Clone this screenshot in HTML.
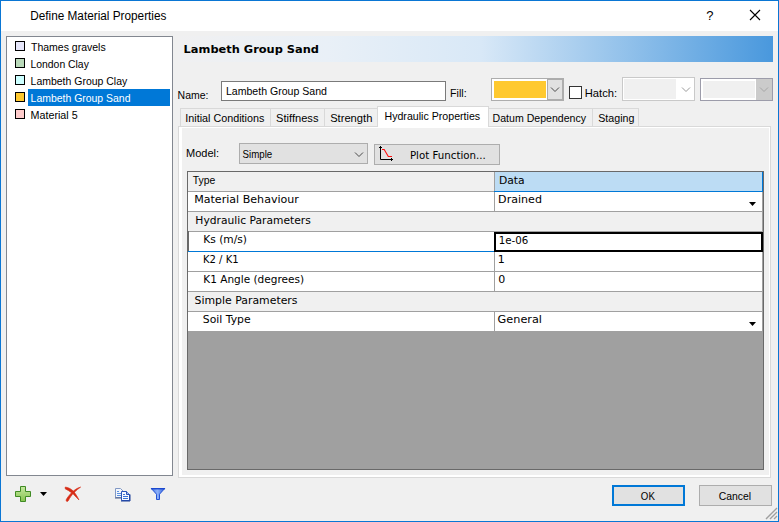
<!DOCTYPE html>
<html><head><meta charset="utf-8"><title>Define Material Properties</title>
<style>
html,body{margin:0;padding:0;}
body{width:779px;height:522px;overflow:hidden;background:#f0f0f0;position:relative;font-family:"Liberation Sans",sans-serif;font-size:11px;color:#000;}
.a{position:absolute;box-sizing:border-box;}
svg text{white-space:pre;}
.tab{position:absolute;box-sizing:border-box;top:108px;height:18px;border:1px solid #d9d9d9;border-bottom:none;background:#f0f0f0;}
.w{background:#fff;}
.g{background:#f0f0f0;}
</style></head><body>
<!-- window frame -->
<div class="a" style="left:0;top:0;width:779px;height:522px;border:1px solid #0a76d4;"></div>
<div class="a w" style="left:1px;top:1px;width:777px;height:30px;"></div>
<svg class="a" style="left:749px;top:9px;" width="12" height="12" viewBox="0 0 12 12"><path d="M1 1 L11 11 M11 1 L1 11" stroke="#000" stroke-width="1.1" fill="none"/></svg>

<!-- list box -->
<div class="a w" style="left:6px;top:36px;width:167px;height:440px;border:1px solid #828790;"></div>
<div class="a" style="left:28px;top:89px;width:142px;height:17px;background:#0078d7;"></div>
<div class="a" style="left:15px;top:41px;width:10px;height:10px;border:1px solid #000;background:#e6e6fa;"></div>
<div class="a" style="left:15px;top:58px;width:10px;height:10px;border:1px solid #000;background:#b9d9b9;"></div>
<div class="a" style="left:15px;top:75px;width:10px;height:10px;border:1px solid #000;background:#ccffff;"></div>
<div class="a" style="left:15px;top:92px;width:10px;height:10px;border:1px solid #000;background:#ffc92f;"></div>
<div class="a" style="left:15px;top:109px;width:10px;height:10px;border:1px solid #000;background:#ffcccc;"></div>

<!-- header band -->
<div class="a" style="left:178px;top:36px;width:595px;height:26px;background:linear-gradient(to right,#f0f0f1 0%,#e9f0f7 25%,#d8e8f7 51%,#90c0ea 76%,#4998dd 100%);"></div>

<!-- name row -->
<div class="a w" style="left:221px;top:81px;width:225px;height:20px;border:1px solid #7a7a7a;"></div>
<div class="a w" style="left:491px;top:78px;width:73px;height:23px;border:1px solid #adadad;"></div>
<div class="a" style="left:494px;top:81px;width:52px;height:17px;background:#ffc92f;"></div>
<div class="a" style="left:547px;top:79px;width:17px;height:21px;background:#e1e1e1;border:1px solid #adadad;border-right-width:2px;"></div>
<svg class="a" style="left:550px;top:86px;" width="10" height="7" viewBox="0 0 10 7"><path d="M1 1.500 L5 5.500 L9 1.500" stroke="#4a4a4a" stroke-width="1" fill="none"/></svg>
<div class="a w" style="left:569px;top:86px;width:13px;height:13px;border:1px solid #333;"></div>
<div class="a w" style="left:622px;top:77px;width:73px;height:24px;border:1px solid #c9c9c9;"></div>
<div class="a g" style="left:624px;top:79px;width:52px;height:20px;"></div>
<svg class="a" style="left:681px;top:86px;" width="10" height="7" viewBox="0 0 10 7"><path d="M1 1.500 L5 5.500 L9 1.500" stroke="#9a9a9a" stroke-width="1" fill="none"/></svg>
<div class="a w" style="left:700px;top:78px;width:73px;height:23px;border:1px solid #9c9caa;"></div>
<div class="a g" style="left:703px;top:81px;width:52px;height:17px;"></div>
<div class="a" style="left:756px;top:79px;width:16px;height:21px;background:#cbcbcb;"></div>
<svg class="a" style="left:759px;top:86px;" width="10" height="7" viewBox="0 0 10 7"><path d="M1 1.500 L5 5.500 L9 1.500" stroke="#a6a6a6" stroke-width="1" fill="none"/></svg>

<!-- tab pane -->
<div class="a w" style="left:178px;top:126px;width:593px;height:352px;border:1px solid #d9d9d9;"></div>
<div class="a g" style="left:182px;top:128px;width:587px;height:347px;"></div>
<!-- tabs -->
<div class="tab" style="left:180px;width:91px;"></div>
<div class="tab" style="left:270px;width:55px;"></div>
<div class="tab" style="left:324px;width:54px;"></div>
<div class="tab" style="left:488px;width:105px;"></div>
<div class="tab" style="left:592px;width:47px;"></div>
<div class="a w" style="left:377px;top:106px;width:112px;height:21px;border:1px solid #d9d9d9;border-bottom:none;"></div>

<!-- model row -->
<div class="a" style="left:239px;top:143px;width:129px;height:21px;background:#e1e1e1;border:1px solid #adadad;"></div>
<svg class="a" style="left:354px;top:151px;" width="10" height="7" viewBox="0 0 10 7"><path d="M1 1.500 L5 5.500 L9 1.500" stroke="#4a4a4a" stroke-width="1" fill="none"/></svg>
<div class="a" style="left:374px;top:144px;width:126px;height:21px;background:#e1e1e1;border:1px solid #adadad;"></div>
<svg class="a" style="left:378px;top:145px;" width="17" height="17" viewBox="0 0 17 17"><path d="M2.500 1 V14.500 H15" stroke="#000" stroke-width="1" fill="none"/><path d="M1 2.500 H4 M13.500 13 V16" stroke="#000" stroke-width="1" fill="none"/><path d="M4 4.500 H6.200 L10.300 11.500 H14" stroke="#ff1010" stroke-width="1.100" fill="none"/></svg>

<!-- grid -->
<div class="a" style="left:187px;top:171px;width:577px;height:299px;background:#a0a0a0;border:1px solid #696969;"></div>
<div class="a g" style="left:188px;top:172px;width:306px;height:19px;"></div>
<div class="a" style="left:495px;top:172px;width:268px;height:19px;background:#bcdcf4;border-right:1px solid #0078d7;"></div>
<div class="a" style="left:494px;top:172px;width:1px;height:159px;background:#a0a0a0;"></div>
<div class="a" style="left:188px;top:191px;width:306px;height:1px;background:#a0a0a0;"></div>
<div class="a" style="left:494px;top:191px;width:269px;height:1px;background:#0078d7;"></div>
<!-- rows -->
<div class="a w" style="left:188px;top:192px;width:306px;height:19px;"></div>
<div class="a w" style="left:495px;top:192px;width:267px;height:19px;"></div>
<div class="a g" style="left:188px;top:212px;width:574px;height:19px;"></div>
<div class="a w" style="left:188px;top:232px;width:306px;height:19px;"></div>
<div class="a w" style="left:495px;top:232px;width:267px;height:19px;"></div>
<div class="a w" style="left:188px;top:252px;width:306px;height:19px;"></div>
<div class="a w" style="left:495px;top:252px;width:267px;height:19px;"></div>
<div class="a w" style="left:188px;top:272px;width:306px;height:19px;"></div>
<div class="a w" style="left:495px;top:272px;width:267px;height:19px;"></div>
<div class="a g" style="left:188px;top:292px;width:574px;height:19px;"></div>
<div class="a w" style="left:188px;top:312px;width:306px;height:19px;"></div>
<div class="a w" style="left:495px;top:312px;width:267px;height:19px;"></div>
<!-- Ks focus -->
<div class="a" style="left:188px;top:231px;width:1px;height:20px;background:#696969;"></div>
<div class="a" style="left:188px;top:251px;width:306px;height:1px;background:#0078d7;"></div>
<div class="a w" style="left:494px;top:232px;width:269px;height:20px;border:2px solid #000;"></div>
<svg class="a" style="left:749px;top:202px;" width="7" height="4" viewBox="0 0 7 4"><path d="M0 0 H7 L3.500 4 Z" fill="#000"/></svg>
<svg class="a" style="left:749px;top:322px;" width="7" height="4" viewBox="0 0 7 4"><path d="M0 0 H7 L3.500 4 Z" fill="#000"/></svg>

<!-- bottom toolbar -->
<svg class="a" style="left:14px;top:485px;" width="18" height="18" viewBox="0 0 18 18"><defs><linearGradient id="gp" x1="0" y1="0" x2="0" y2="1"><stop offset="0" stop-color="#c5e8a0"/><stop offset="1" stop-color="#86c44f"/></linearGradient></defs><path d="M6.500 1.500 H11.500 V6.500 H16.500 V11.500 H11.500 V16.500 H6.500 V11.500 H1.500 V6.500 H6.500 Z" fill="url(#gp)" stroke="#3f8a24" stroke-width="1"/></svg>
<svg class="a" style="left:40px;top:492px;" width="7" height="4" viewBox="0 0 7 4"><path d="M0 0 H7 L3.500 4 Z" fill="#000"/></svg>
<svg class="a" style="left:64px;top:485px;" width="18" height="18" viewBox="0 0 18 18"><path d="M1.200 2.100 C4 2.200,7.200 4.200,9 5.800 C11.200 8.200,13.600 12,14.900 14.900 C12.500 12.500,10 9.600,7.600 7.700 C5.500 6.100,3 4.600,1.300 3.900 Z" fill="#d62a14" stroke="#d8341e" stroke-width="0.700" stroke-linejoin="round"/><path d="M16.600 2.100 C13 3,10 5.300,7.400 7.900 C4.800 10.600,2.600 13.600,2.100 15 C2.100 16.700,3.500 17,4.300 15.700 C5.600 13,8 9.600,10.100 7.500 C12.100 5.500,14.600 3.500,16.600 2.100 Z" fill="#d62a14" stroke="#d8341e" stroke-width="0.700" stroke-linejoin="round"/></svg>
<svg class="a" style="left:114px;top:487px;" width="18" height="15" viewBox="0 0 18 15"><path d="M1.500 1.500 H6.500 L9.500 4.500 V10.500 H1.500 Z" fill="#f3f7fd" stroke="#8198c4" stroke-width="1"/><path d="M1 11 H8" stroke="#4a5c88" stroke-width="1"/><path d="M3 4.500 H5 M3 6.500 H7 M3 8.500 H7" stroke="#5a90e0" stroke-width="1"/><path d="M7.500 4.500 H12.500 L15.500 7.500 V13.500 H7.500 Z" fill="#f6f9ff" stroke="#2a55b8" stroke-width="1"/><path d="M12.500 4.500 V7.500 H15.500" stroke="#2a55b8" stroke-width="1" fill="#9bb8ee"/><path d="M7 14 H16 V7.500" stroke="#1d3f98" stroke-width="1" fill="none"/><path d="M9 7.500 H11 M9 9.500 H14 M9 11.500 H14" stroke="#3a74d8" stroke-width="1"/></svg>
<svg class="a" style="left:150px;top:487px;" width="16" height="14" viewBox="0 0 16 14"><defs><linearGradient id="gf" x1="0" y1="0" x2="1" y2="0"><stop offset="0" stop-color="#3f70e6"/><stop offset="0.450" stop-color="#8fb2f8"/><stop offset="1" stop-color="#2f5fde"/></linearGradient></defs><path d="M1.300 1.500 H14.700 L9.500 7.200 V12.500 H6.500 V7.200 Z" fill="url(#gf)" stroke="#2352d6" stroke-width="1" stroke-linejoin="round"/><path d="M1 1.700 H15" stroke="#1c49cf" stroke-width="1.400"/></svg>

<!-- buttons -->
<div class="a" style="left:612px;top:485px;width:73px;height:21px;background:#e1e1e1;border:2px solid #0078d7;"></div>
<div class="a" style="left:699px;top:485px;width:73px;height:21px;background:#e1e1e1;border:1px solid #adadad;"></div>
<svg class="a" style="left:764px;top:506px;" width="14" height="14" viewBox="0 0 14 14"><path d="M13 2 L2 13 M13 6 L6 13 M13 10 L10 13" stroke="#a0a0a0" stroke-width="1.400" fill="none"/></svg>
<svg class="a" style="left:0;top:0;" width="779" height="522" viewBox="0 0 779 522">
<text id="title" x="30.24" y="20" font-family="'Liberation Sans',sans-serif" font-size="12" font-weight="normal" fill="#000" textLength="136.16" lengthAdjust="spacingAndGlyphs">Define Material Properties</text>
<text id="q" x="706.34" y="20" font-family="'Liberation Sans',sans-serif" font-size="13" font-weight="normal" fill="#000">?</text>
<text id="l1" x="30.97" y="51" font-family="'Liberation Sans',sans-serif" font-size="11" font-weight="normal" fill="#000" textLength="74.75" lengthAdjust="spacingAndGlyphs">Thames gravels</text>
<text id="l2" x="30.46" y="68" font-family="'Liberation Sans',sans-serif" font-size="11" font-weight="normal" fill="#000" textLength="58.42" lengthAdjust="spacingAndGlyphs">London Clay</text>
<text id="l3" x="30.61" y="85" font-family="'Liberation Sans',sans-serif" font-size="11" font-weight="normal" fill="#000" textLength="96.60" lengthAdjust="spacingAndGlyphs">Lambeth Group Clay</text>
<text id="l4" x="30.61" y="102" font-family="'Liberation Sans',sans-serif" font-size="11" font-weight="normal" fill="#fff" textLength="99.85" lengthAdjust="spacingAndGlyphs">Lambeth Group Sand</text>
<text id="l5" x="30.58" y="119" font-family="'Liberation Sans',sans-serif" font-size="11" font-weight="normal" fill="#000" textLength="47.06" lengthAdjust="spacingAndGlyphs">Material 5</text>
<text id="hdr" x="183.62" y="53" font-family="'DejaVu Sans','Liberation Sans',sans-serif" font-size="11" font-weight="bold" fill="#000" textLength="135.36" lengthAdjust="spacingAndGlyphs">Lambeth Group Sand</text>
<text id="name" x="177.58" y="99" font-family="'Liberation Sans',sans-serif" font-size="11" font-weight="normal" fill="#000" textLength="30.82" lengthAdjust="spacingAndGlyphs">Name:</text>
<text id="nameval" x="225.95" y="95" font-family="'Liberation Sans',sans-serif" font-size="11" font-weight="normal" fill="#000" textLength="101.03" lengthAdjust="spacingAndGlyphs">Lambeth Group Sand</text>
<text id="fill" x="450.04" y="97" font-family="'Liberation Sans',sans-serif" font-size="11" font-weight="normal" fill="#000" textLength="16.63" lengthAdjust="spacingAndGlyphs">Fill:</text>
<text id="hatch" x="584.74" y="97" font-family="'Liberation Sans',sans-serif" font-size="11" font-weight="normal" fill="#000" textLength="32.34" lengthAdjust="spacingAndGlyphs">Hatch:</text>
<text id="t1" x="185.32" y="122" font-family="'Liberation Sans',sans-serif" font-size="11" font-weight="normal" fill="#000" textLength="78.97" lengthAdjust="spacingAndGlyphs">Initial Conditions</text>
<text id="t2" x="276.08" y="122" font-family="'Liberation Sans',sans-serif" font-size="11" font-weight="normal" fill="#000" textLength="42.38" lengthAdjust="spacingAndGlyphs">Stiffness</text>
<text id="t3" x="330.16" y="122" font-family="'Liberation Sans',sans-serif" font-size="11" font-weight="normal" fill="#000" textLength="42.19" lengthAdjust="spacingAndGlyphs">Strength</text>
<text id="t4" x="384.47" y="120" font-family="'Liberation Sans',sans-serif" font-size="11" font-weight="normal" fill="#000" textLength="95.67" lengthAdjust="spacingAndGlyphs">Hydraulic Properties</text>
<text id="t5" x="492.58" y="122" font-family="'Liberation Sans',sans-serif" font-size="11" font-weight="normal" fill="#000" textLength="93.41" lengthAdjust="spacingAndGlyphs">Datum Dependency</text>
<text id="t6" x="598.26" y="122" font-family="'Liberation Sans',sans-serif" font-size="11" font-weight="normal" fill="#000" textLength="36.17" lengthAdjust="spacingAndGlyphs">Staging</text>
<text id="model" x="186.01" y="157" font-family="'Liberation Sans',sans-serif" font-size="11" font-weight="normal" fill="#000" textLength="33.06" lengthAdjust="spacingAndGlyphs">Model:</text>
<text id="simple" x="242.57" y="158" font-family="'Liberation Sans',sans-serif" font-size="11" font-weight="normal" fill="#000" textLength="29.68" lengthAdjust="spacingAndGlyphs">Simple</text>
<text id="plot" x="409.91" y="159" font-family="'DejaVu Sans','Liberation Sans',sans-serif" font-size="11" font-weight="normal" fill="#000" textLength="75.92" lengthAdjust="spacingAndGlyphs">Plot Function...</text>
<text id="g0" x="192.76" y="184" font-family="'Liberation Sans',sans-serif" font-size="11" font-weight="normal" fill="#000" textLength="22.57" lengthAdjust="spacingAndGlyphs">Type</text>
<text id="g0b" x="498.92" y="184" font-family="'DejaVu Sans','Liberation Sans',sans-serif" font-size="11" font-weight="normal" fill="#000" textLength="25.75" lengthAdjust="spacingAndGlyphs">Data</text>
<text id="g1" x="194.19" y="203" font-family="'DejaVu Sans','Liberation Sans',sans-serif" font-size="11" font-weight="normal" fill="#000" textLength="104.72" lengthAdjust="spacingAndGlyphs">Material Behaviour</text>
<text id="g1b" x="498.13" y="203" font-family="'DejaVu Sans','Liberation Sans',sans-serif" font-size="11" font-weight="normal" fill="#000" textLength="43.86" lengthAdjust="spacingAndGlyphs">Drained</text>
<text id="g2" x="195.34" y="224" font-family="'DejaVu Sans','Liberation Sans',sans-serif" font-size="11" font-weight="normal" fill="#000" textLength="115.40" lengthAdjust="spacingAndGlyphs">Hydraulic Parameters</text>
<text id="g3" x="203.22" y="243" font-family="'DejaVu Sans','Liberation Sans',sans-serif" font-size="11" font-weight="normal" fill="#000" textLength="43.72" lengthAdjust="spacingAndGlyphs">Ks (m/s)</text>
<text id="g3b" x="498.69" y="244" font-family="'DejaVu Sans','Liberation Sans',sans-serif" font-size="11" font-weight="normal" fill="#000" textLength="29.52" lengthAdjust="spacingAndGlyphs">1e-06</text>
<text id="g4" x="202.96" y="263" font-family="'DejaVu Sans','Liberation Sans',sans-serif" font-size="11" font-weight="normal" fill="#000" textLength="35.66" lengthAdjust="spacingAndGlyphs">K2 / K1</text>
<text id="g4b" x="497.73" y="263" font-family="'DejaVu Sans','Liberation Sans',sans-serif" font-size="11" font-weight="normal" fill="#000">1</text>
<text id="g5" x="203.25" y="283" font-family="'DejaVu Sans','Liberation Sans',sans-serif" font-size="11" font-weight="normal" fill="#000" textLength="100.80" lengthAdjust="spacingAndGlyphs">K1 Angle (degrees)</text>
<text id="g5b" x="498.13" y="283" font-family="'DejaVu Sans','Liberation Sans',sans-serif" font-size="11" font-weight="normal" fill="#000">0</text>
<text id="g6" x="194.51" y="304" font-family="'DejaVu Sans','Liberation Sans',sans-serif" font-size="11" font-weight="normal" fill="#000" textLength="103.04" lengthAdjust="spacingAndGlyphs">Simple Parameters</text>
<text id="g7" x="202.82" y="323" font-family="'DejaVu Sans','Liberation Sans',sans-serif" font-size="11" font-weight="normal" fill="#000" textLength="47.86" lengthAdjust="spacingAndGlyphs">Soil Type</text>
<text id="g7b" x="497.59" y="323" font-family="'DejaVu Sans','Liberation Sans',sans-serif" font-size="11" font-weight="normal" fill="#000" textLength="44.41" lengthAdjust="spacingAndGlyphs">General</text>
<text id="ok" x="640.85" y="500" font-family="'Liberation Sans',sans-serif" font-size="11" font-weight="normal" fill="#000" textLength="14.01" lengthAdjust="spacingAndGlyphs">OK</text>
<text id="cancel" x="718.78" y="500" font-family="'Liberation Sans',sans-serif" font-size="11" font-weight="normal" fill="#000" textLength="32.38" lengthAdjust="spacingAndGlyphs">Cancel</text>
</svg>
</body></html>
